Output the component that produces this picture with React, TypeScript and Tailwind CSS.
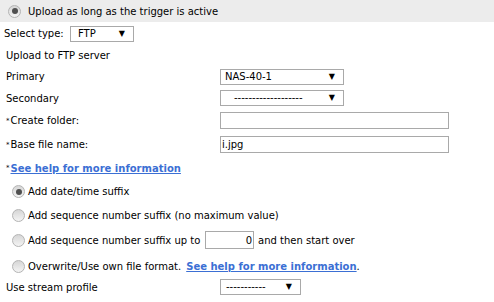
import React from "react";

function Radio({ checked = false }: { checked?: boolean }) {
  return (
    <span className="inline-flex items-center justify-center w-[13px] h-[13px] rounded-full border border-[#b4b4b4] bg-gradient-to-b from-[#d6d6d6] to-[#f4f4f4] shrink-0">
      {checked && <span className="w-[6px] h-[6px] rounded-full bg-[#505050]" />}
    </span>
  );
}

function FakeSelect({ value, width, padLeft = "pl-[7px]" }: { value: string; width: string; padLeft?: string }) {
  return (
    <div className={`${width} h-[16px] border border-[#a9a9a9] bg-white flex items-center justify-between ${padLeft} pr-[8px]`}>
      <span className="leading-none">{value}</span>
      <span className="text-[8px] leading-none">▼</span>
    </div>
  );
}

function Star() {
  return <sup className="text-[7px] relative top-[-1px] mr-[1px]">*</sup>;
}

function Row({ h, children, className = "" }: { h: string; children: React.ReactNode; className?: string }) {
  return <div className={`flex items-center ${h} ${className}`}>{children}</div>;
}

export default function App() {
  return (
    <div className="w-[494px] h-[302px] bg-white text-black text-[10px] overflow-hidden" style={{ fontFamily: '"DejaVu Sans", Verdana, sans-serif' }}>
      {/* trigger bar */}
      <div className="h-[22px] bg-[#ececec] flex items-center pl-[8px]">
        <Radio checked />
        <span className="ml-[7px]">Upload as long as the trigger is active</span>
      </div>

      <Row h="h-[23px]" className="pl-[4px]">
        <span className="w-[66px]">Select type:</span>
        <FakeSelect value="FTP" width="w-[64px]" />
      </Row>

      <Row h="h-[21px]" className="pl-[6px]">
        <span>Upload to FTP server</span>
      </Row>

      <Row h="h-[21px]" className="pl-[6px]">
        <span className="w-[214px]">Primary</span>
        <FakeSelect value="NAS-40-1" width="w-[124px]" padLeft="pl-[4px]" />
      </Row>

      <Row h="h-[22px]" className="pl-[6px]">
        <span className="w-[214px]">Secondary</span>
        <FakeSelect value="-------------------" width="w-[124px]" padLeft="pl-[13px]" />
      </Row>

      <Row h="h-[23px]" className="pl-[6px]">
        <span className="w-[214px]"><Star />Create folder:</span>
        <div className="w-[229px] h-[17px] border border-[#a9a9a9]" />
      </Row>

      <Row h="h-[25px]" className="pl-[6px]">
        <span className="w-[214px]"><Star />Base file name:</span>
        <div className="w-[229px] h-[17px] border border-[#a9a9a9] flex items-center pl-[1px]">i.jpg</div>
      </Row>

      <Row h="h-[23px]" className="pl-[6px]">
        <Star />
        <a className="font-bold text-[#3b6fd4] underline">See help for more information</a>
      </Row>

      <Row h="h-[23px]" className="pl-[12px]">
        <Radio checked />
        <span className="ml-[3px]">Add date/time suffix</span>
      </Row>

      <Row h="h-[24px]" className="pl-[12px]">
        <Radio />
        <span className="ml-[3px]">Add sequence number suffix (no maximum value)</span>
      </Row>

      <Row h="h-[26px]" className="pl-[12px]">
        <Radio />
        <span className="ml-[3px] w-[177px]">Add sequence number suffix up to</span>
        <div className="w-[49px] h-[18px] border border-[#a9a9a9] flex items-center justify-end pr-[1px]">0</div>
        <span className="ml-[4px]">and then start over</span>
      </Row>

      <Row h="h-[26px]" className="pl-[12px]">
        <Radio />
        <span className="ml-[3px]">Overwrite/Use own file format.</span>
        <a className="ml-[5px] font-bold text-[#3b6fd4] underline">See help for more information</a>
        <span>.</span>
      </Row>

      <Row h="h-[16px]" className="pl-[6px]">
        <span className="w-[214px]">Use stream profile</span>
        <FakeSelect value="-----------" width="w-[81px]" padLeft="pl-[5px]" />
      </Row>
    </div>
  );
}
